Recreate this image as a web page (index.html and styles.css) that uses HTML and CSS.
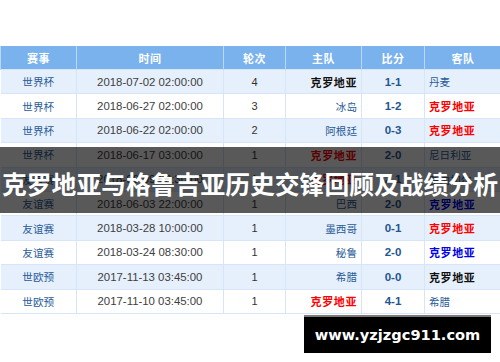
FILE: index.html
```html
<!DOCTYPE html>
<html lang="zh-CN">
<head>
<meta charset="utf-8">
<title>克罗地亚与格鲁吉亚历史交锋回顾及战绩分析</title>
<link rel="stylesheet" href="styles.css">
</head>
<body>
<div class="page">
  <table class="matches">
    <colgroup>
      <col class="c-evt"><col class="c-time"><col class="c-rnd"><col class="c-home"><col class="c-score"><col class="c-away">
    </colgroup>
    <thead>
      <tr><th>赛事</th><th>时间</th><th>轮次</th><th>主队</th><th>比分</th><th>客队</th></tr>
    </thead>
    <tbody>
      <tr><td class="evt">世界杯</td><td class="time">2018-07-02 02:00:00</td><td class="rnd">4</td><td class="home"><b class="black">克罗地亚</b></td><td class="score">1-1</td><td class="away">丹麦</td></tr>
      <tr><td class="evt">世界杯</td><td class="time">2018-06-27 02:00:00</td><td class="rnd">3</td><td class="home">冰岛</td><td class="score">1-2</td><td class="away"><b class="red">克罗地亚</b></td></tr>
      <tr><td class="evt">世界杯</td><td class="time">2018-06-22 02:00:00</td><td class="rnd">2</td><td class="home">阿根廷</td><td class="score">0-3</td><td class="away"><b class="red">克罗地亚</b></td></tr>
      <tr><td class="evt">世界杯</td><td class="time">2018-06-17 03:00:00</td><td class="rnd">1</td><td class="home"><b class="red">克罗地亚</b></td><td class="score">2-0</td><td class="away">尼日利亚</td></tr>
      <tr><td class="evt">友谊赛</td><td class="time">2018-06-09 02:30:00</td><td class="rnd">1</td><td class="home"><b class="red">克罗地亚</b></td><td class="score">2-1</td><td class="away">塞内加尔</td></tr>
      <tr><td class="evt">友谊赛</td><td class="time">2018-06-03 22:00:00</td><td class="rnd">1</td><td class="home">巴西</td><td class="score">2-0</td><td class="away"><b class="blue">克罗地亚</b></td></tr>
      <tr><td class="evt">友谊赛</td><td class="time">2018-03-28 10:00:00</td><td class="rnd">1</td><td class="home">墨西哥</td><td class="score">0-1</td><td class="away"><b class="red">克罗地亚</b></td></tr>
      <tr><td class="evt">友谊赛</td><td class="time">2018-03-24 08:30:00</td><td class="rnd">1</td><td class="home">秘鲁</td><td class="score">2-0</td><td class="away"><b class="blue">克罗地亚</b></td></tr>
      <tr><td class="evt">世欧预</td><td class="time">2017-11-13 03:45:00</td><td class="rnd">1</td><td class="home">希腊</td><td class="score">0-0</td><td class="away"><b class="black">克罗地亚</b></td></tr>
      <tr><td class="evt">世欧预</td><td class="time">2017-11-10 03:45:00</td><td class="rnd">1</td><td class="home"><b class="red">克罗地亚</b></td><td class="score">4-1</td><td class="away">希腊</td></tr>
    </tbody>
  </table>
  <h1 class="banner">克罗地亚与格鲁吉亚历史交锋回顾及战绩分析</h1>
  <div class="watermark">www.yzjzgc911.com</div>
</div>
</body>
</html>
```

FILE: styles.css
```css
html, body {
  margin: 0;
  padding: 0;
  background: #ffffff;
}

.page {
  position: relative;
  width: 500px;
  height: 362px;
  overflow: hidden;
  padding-top: 46px;
  box-sizing: border-box;
  font-family: "Liberation Sans", "Noto Sans CJK SC", sans-serif;
}

.matches {
  width: 501px;
  table-layout: fixed;
  border-collapse: collapse;
  font-size: 11px;
}

.c-evt { width: 76px; }
.c-time { width: 147px; }
.c-rnd { width: 62px; }
.c-home { width: 76px; }
.c-score { width: 63px; }
.c-away { width: 77px; }

.matches th {
  height: 23px;
  padding: 0;
  background: #79b2ed;
  color: #ffffff;
  font-weight: bold;
  font-size: 11px;
  letter-spacing: 0.6px;
  text-align: center;
  border-left: 1px solid #b9d7f6;
  border-right: 1px solid #b9d7f6;
}

.matches td {
  height: 23.4px;
  padding: 0;
  text-align: center;
  border: 1px solid #d6e6f8;
  color: #333333;
  white-space: nowrap;
}

.matches tbody tr:nth-child(odd) td {
  background: #e6f0fc;
}

.matches tbody tr:nth-child(even) td {
  background: #ffffff;
}

.matches td.evt {
  color: #2a5b98;
  font-size: 10.6px;
  border-left: 0;
}

.matches td.time {
  color: #3e3e3e;
  font-size: 11.4px;
}

.matches td.rnd {
  color: #333333;
}

.matches td.home {
  text-align: right;
  padding-right: 4px;
  color: #2a5b98;
  font-size: 10.6px;
}

.matches td.away {
  text-align: left;
  padding-left: 4px;
  color: #2a5b98;
  font-size: 10.6px;
}

.matches td.score {
  color: #24558f;
  font-weight: bold;
  font-size: 11.5px;
}

.matches b {
  font-size: 11px;
  letter-spacing: 0.6px;
}

.black { color: #111111; }
.red { color: #ff0000; }
.blue { color: #0000ee; }

.banner {
  position: absolute;
  left: 0;
  top: 147px;
  width: 500px;
  height: 66px;
  margin: 0;
  padding-top: 7px;
  box-sizing: border-box;
  background: rgba(0, 0, 0, 0.65);
  color: #ffffff;
  font-family: "Noto Sans CJK SC", sans-serif;
  font-weight: bold;
  font-size: 24.8px;
  line-height: 59px;
  text-align: center;
  white-space: nowrap;
  letter-spacing: 0;
}

.watermark {
  position: absolute;
  left: 304px;
  top: 315px;
  width: 187px;
  height: 38px;
  box-sizing: border-box;
  border-top: 2px solid #7a7a7a;
  background: #000000;
  color: #ffffff;
  font-family: "DejaVu Sans", sans-serif;
  font-weight: bold;
  font-size: 14.6px;
  line-height: 36px;
  text-align: center;
}
```
